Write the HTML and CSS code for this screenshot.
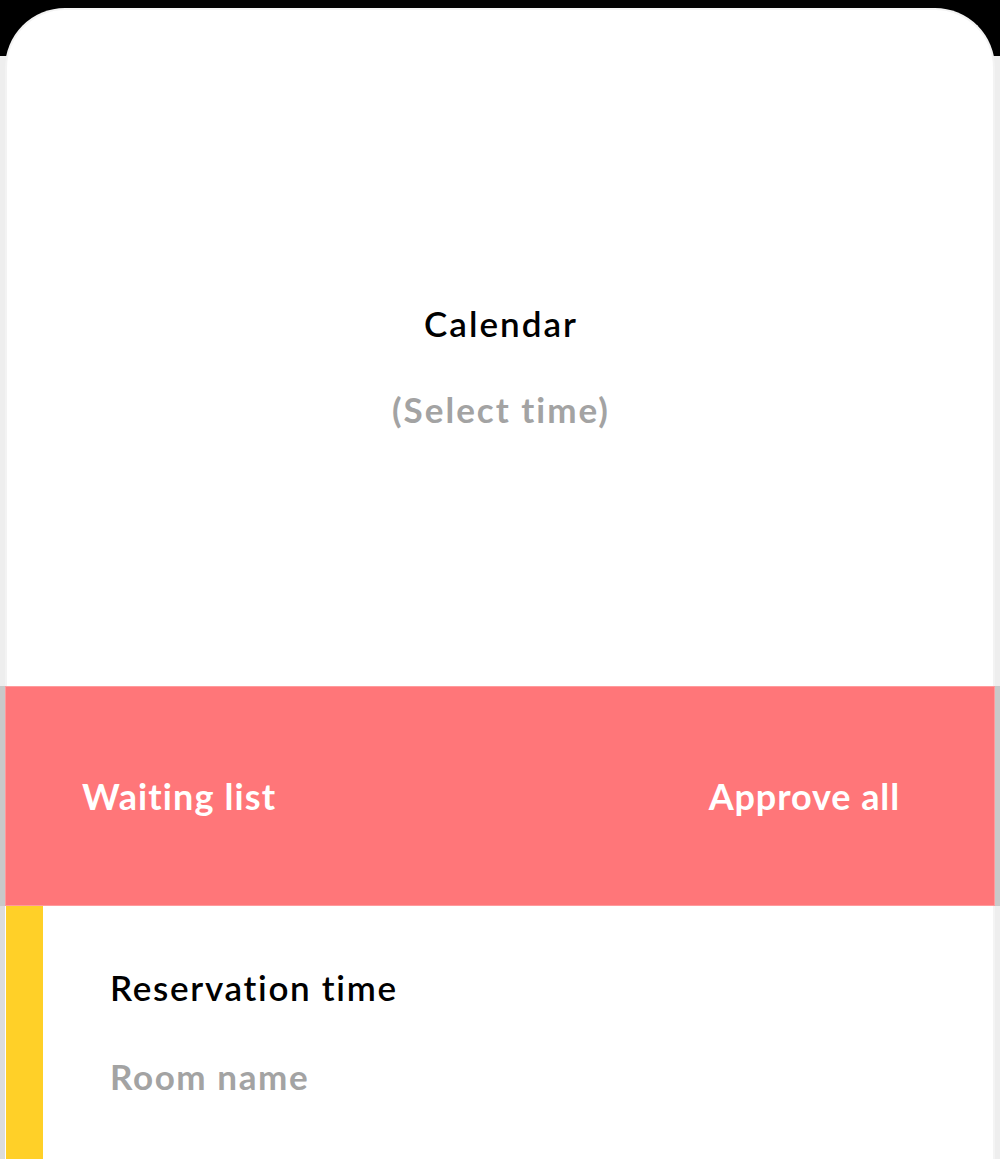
FILE: index.html
```html
<!DOCTYPE html>
<html lang="en">
<head>
<meta charset="utf-8">
<title>Calendar</title>
<link rel="stylesheet" href="styles.css">
</head>
<body>
<div class="screen">
  <section class="calendar">
    <div class="calendar-title">Calendar</div>
    <div class="calendar-sub">(Select time)</div>
  </section>
  <section class="waiting">
    <div class="waiting-inner">
      <span class="waiting-title">Waiting list</span>
      <span class="waiting-action">Approve all</span>
    </div>
  </section>
  <section class="reservation">
    <div class="reservation-inner">
      <div class="res-accent"></div>
      <div class="res-body">
        <div class="res-time">Reservation time</div>
        <div class="res-room">Room name</div>
      </div>
    </div>
  </section>
</div>
</body>
</html>
```

FILE: styles.css
```css
html, body {
  margin: 0;
  padding: 0;
}
body {
  width: 1000px;
  height: 1159px;
  overflow: hidden;
  background: linear-gradient(to bottom, #000 0, #000 56px, #eeeeee 56px);
  font-family: "Lato", "Open Sans", sans-serif;
  font-variant-ligatures: none;
}
.screen {
  padding-top: 8px;
  display: flex;
  flex-direction: column;
}
.calendar {
  margin: 0 5px;
  height: 678px;
  box-sizing: border-box;
  background: #fff;
  border: 2px solid #f3f3f3;
  border-bottom: none;
  border-radius: 60px 60px 0 0;
  display: flex;
  flex-direction: column;
  align-items: center;
  padding-top: 293px;
}
.calendar-title {
  font-size: 35px;
  font-weight: 600;
  color: #000;
  line-height: 40px;
  letter-spacing: 2px;
  padding-left: 2px;
}
.calendar-sub {
  margin-top: 46px;
  font-size: 35px;
  font-weight: 700;
  color: #a3a3a3;
  line-height: 40px;
  letter-spacing: 2px;
  padding-left: 2px;
}
.waiting {
  height: 220px;
  background: #c9c9c9;
  padding: 0 5px;
  box-sizing: border-box;
}
.waiting-inner {
  height: 100%;
  background: #ff7679;
  border: 1px solid #ff9a9c;
  box-sizing: border-box;
  display: flex;
  justify-content: space-between;
  align-items: center;
  padding: 0 94px 0 76px;
  color: #fff;
  font-size: 36px;
  font-weight: 700;
}
.waiting-title {
  letter-spacing: 1.1px;
}
.waiting-action {
  letter-spacing: 0.9px;
}
.reservation {
  height: 253px;
  background: linear-gradient(to right, #dcdcdc 0, #dcdcdc 5px, transparent 5px);
  padding: 0 5px;
}
.reservation-inner {
  height: 100%;
  background: #fff;
  border-right: 2px solid #f4f4f4;
  display: flex;
}
.res-accent {
  width: 37px;
  margin-left: 1px;
  background: #ffd028;
}
.res-body {
  padding: 61px 0 0 67px;
}
.res-time {
  font-size: 35px;
  font-weight: 600;
  color: #000;
  line-height: 40px;
  letter-spacing: 1.7px;
}
.res-room {
  margin-top: 49px;
  font-size: 35px;
  font-weight: 700;
  color: #a3a3a3;
  line-height: 40px;
  letter-spacing: 1.6px;
}
```
